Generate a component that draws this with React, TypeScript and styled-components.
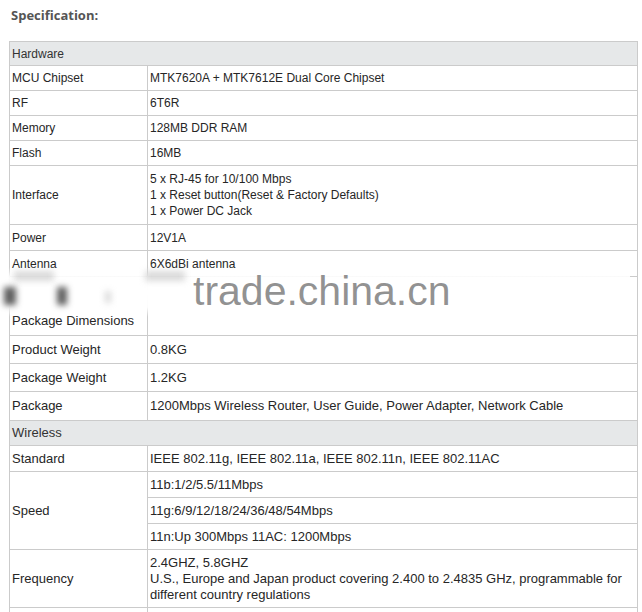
import styled, { createGlobalStyle } from 'styled-components';

const GlobalStyle = createGlobalStyle`
  html, body {
    margin: 0;
    padding: 0;
    background: #ffffff;
  }
  body {
    font-family: "Liberation Sans", Arial, sans-serif;
    color: #2b2b2b;
  }
`;

type Row = { label: string; value: string[]; h: number; big?: boolean; bottom?: boolean };

const hardware: Row[] = [
  { label: 'MCU Chipset', value: ['MTK7620A + MTK7612E Dual Core Chipset'], h: 25 },
  { label: 'RF', value: ['6T6R'], h: 25 },
  { label: 'Memory', value: ['128MB DDR RAM'], h: 25 },
  { label: 'Flash', value: ['16MB'], h: 25 },
  {
    label: 'Interface',
    value: ['5 x RJ-45 for 10/100 Mbps', '1 x Reset button(Reset & Factory Defaults)', '1 x Power DC Jack'],
    h: 59,
  },
  { label: 'Power', value: ['12V1A'], h: 26 },
  { label: 'Antenna', value: ['6X6dBi antenna'], h: 26 },
  { label: 'Package Dimensions', value: [], h: 59, big: true, bottom: true },
  { label: 'Product Weight', value: ['0.8KG'], h: 28, big: true },
  { label: 'Package Weight', value: ['1.2KG'], h: 28, big: true },
  { label: 'Package', value: ['1200Mbps Wireless Router, User Guide, Power Adapter, Network Cable'], h: 29, big: true },
];

const speeds = ['11b:1/2/5.5/11Mbps', '11g:6/9/12/18/24/36/48/54Mbps', '11n:Up 300Mbps 11AC: 1200Mbps'];

export default function App() {
  return (
    <Page>
      <GlobalStyle />
      <Title>Specification:</Title>
      <TableWrap>
        <Table>
          <colgroup>
            <col style={{ width: 138 }} />
            <col />
          </colgroup>
          <tbody>
            <tr>
              <SectionCell colSpan={2} $h={24}>Hardware</SectionCell>
            </tr>
            {hardware.map((r) => (
              <tr key={r.label}>
                <LabelCell $h={r.h} $big={r.big} $bottom={r.bottom}>{r.label}</LabelCell>
                <ValueCell $h={r.h} $big={r.big}>
                  {r.value.map((line) => (
                    <Line key={line}>{line}</Line>
                  ))}
                </ValueCell>
              </tr>
            ))}
            <tr>
              <SectionCell colSpan={2} $h={25} $big>Wireless</SectionCell>
            </tr>
            <tr>
              <LabelCell $h={26} $big>Standard</LabelCell>
              <ValueCell $h={26} $big>IEEE 802.11g, IEEE 802.11a, IEEE 802.11n, IEEE 802.11AC</ValueCell>
            </tr>
            {speeds.map((s, i) => (
              <tr key={s}>
                {i === 0 && (
                  <LabelCell rowSpan={3} $h={26} $big>
                    Speed
                  </LabelCell>
                )}
                <ValueCell $h={26} $big>{s}</ValueCell>
              </tr>
            ))}
            <tr>
              <LabelCell $h={58} $big>Frequency</LabelCell>
              <ValueCell $h={58} $big>
                <Line>2.4GHZ, 5.8GHZ</Line>
                <Line>U.S., Europe and Japan product covering 2.400 to 2.4835 GHz, programmable for</Line>
                <Line>different country regulations</Line>
              </ValueCell>
            </tr>
            <tr>
              <LabelCell $h={40} $big />
              <ValueCell $h={40} $big />
            </tr>
          </tbody>
        </Table>

        <Fog>
          <Smudge style={{ left: 4, top: 20, width: 12, height: 18 }} />
          <Smudge style={{ left: 57, top: 20, width: 10, height: 18 }} />
          <Smudge style={{ left: 105, top: 24, width: 6, height: 12 }} $light />
          <Smudge style={{ left: 14, top: 4, width: 40, height: 10 }} $light />
          <Smudge style={{ left: 145, top: 4, width: 40, height: 10 }} $light />
        </Fog>
        <Watermark>trade.china.cn</Watermark>
      </TableWrap>
    </Page>
  );
}

const Page = styled.div`
  width: 642px;
  height: 612px;
  overflow: hidden;
  padding-top: 6px;
  box-sizing: border-box;
`;

const Title = styled.div`
  margin: 0 0 17px 11px;
  font-family: "Open Sans", "Liberation Sans", sans-serif;
  font-size: 13px;
  font-weight: 700;
  line-height: 18px;
  color: #555555;
`;

const TableWrap = styled.div`
  position: relative;
  margin-left: 9px;
  width: 629px;
`;

const Table = styled.table`
  width: 629px;
  border-collapse: collapse;
  table-layout: fixed;
  border: 1px solid #c4c4c4;
  border-right-color: #b4b4b4;

  td {
    border: 1px solid #cbcbcb;
  }
`;

const Cell = styled.td<{ $h: number; $big?: boolean }>`
  height: ${({ $h }) => $h}px;
  padding: 0 2px;
  font-size: ${({ $big }) => ($big ? 13 : 12)}px;
  line-height: 16px;
  color: #262626;
  box-sizing: border-box;
`;

const SectionCell = styled(Cell)`
  background: #e6e8e9;
  color: #333333;
`;

const LabelCell = styled(Cell)<{ $bottom?: boolean }>`
  vertical-align: ${({ $bottom }) => ($bottom ? 'bottom' : 'middle')};
  padding-bottom: ${({ $bottom }) => ($bottom ? '6px' : '0')};
`;

const ValueCell = styled(Cell)`
  vertical-align: middle;
`;

const Line = styled.div`
  white-space: nowrap;
`;

const Fog = styled.div`
  position: absolute;
  left: -9px;
  top: 226px;
  width: 630px;
  height: 50px;
  background: linear-gradient(
    to bottom,
    rgba(255, 255, 255, 0) 0%,
    rgba(255, 255, 255, 0.95) 20%,
    #ffffff 50%,
    rgba(255, 255, 255, 0.95) 80%,
    rgba(255, 255, 255, 0) 100%
  );
`;

const Smudge = styled.div<{ $light?: boolean }>`
  position: absolute;
  background: ${({ $light }) => ($light ? 'rgba(150, 150, 150, 0.35)' : 'rgba(40, 40, 40, 0.75)')};
  filter: blur(3px);
`;

const Watermark = styled.div`
  position: absolute;
  left: 184px;
  top: 230px;
  font-family: "Liberation Sans", Arial, sans-serif;
  font-size: 41px;
  line-height: 40px;
  color: rgba(110, 110, 110, 0.75);
  pointer-events: none;
`;
